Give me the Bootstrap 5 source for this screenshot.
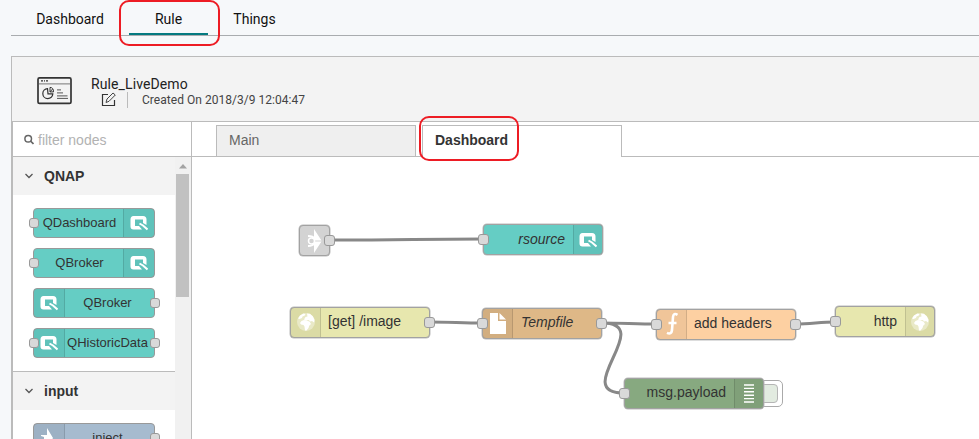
<!DOCTYPE html>
<html lang="en">
<head>
<meta charset="utf-8">
<meta name="viewport" content="width=device-width, initial-scale=1">
<title>Rule_LiveDemo</title>
<link href="https://cdn.jsdelivr.net/npm/bootstrap@5.3.0/dist/css/bootstrap.min.css" rel="stylesheet">
<style>
body{background:#f6f8fa;font-family:Roboto,"Liberation Sans",sans-serif;font-size:14px;line-height:20px;color:#222;height:439px}
svg{display:block;flex:none}
.top-tabs{margin-left:11px;height:36px;border-bottom:1px solid #a9acaf}
.top-tabs .nav-link{color:#111;height:35px;padding:9px 0 0;text-align:center;border-radius:0}
.t-dash{width:118px}.t-rule{width:79px;border-bottom:2px solid #047a80}.t-things{width:91px;margin-left:1px}
.callout{position:absolute;border:2px solid #ed1c24;border-radius:10px;z-index:9}
.c-rule{left:119px;top:0;width:101px;height:46px}
.c-dash{left:419px;top:116px;width:100px;height:45px}
.workspace{margin:20px 0 0 11px;height:383px;border:solid #bbb;border-width:1px 0 0 1px;overflow:hidden}
.rule-head{height:65px;background:#f3f3f3;border-bottom:1px solid #bbb;padding:18px 0 0 25px}
.win-icon{margin-top:2px}
.rule-info{padding-left:18px}
.rule-name{line-height:18px;height:17px;letter-spacing:.1px}
.meta{font-size:12px;line-height:16px;color:#444;padding-left:10px}
.meta .sep{width:1px;height:16px;background:#bbb;margin:0 14px 0 11px}
.stamp{letter-spacing:.03px}
.arial{font-family:"Liberation Sans",Arial,sans-serif}
.palette{width:180px;border:solid #bbb;border-width:0 1px}
.search{height:35px;border-bottom:1px solid #bbb;color:#b2b2b2;padding:1px 0 0 11px}
.cats{width:162px;background:#fff}
.cat{height:38px;background:#f3f3f3;font-weight:700;color:#333;padding-left:11px;gap:10px}
.cat.ruled{height:39px;border-top:1px solid #bbb}
.cat-list{padding:13px 0 13px 20px;gap:10px;height:176px}
.track{width:16px;background:#f1f1f1;flex:none}
.thumb{width:13px;height:123px;background:#c1c1c1;margin-left:1px}
.arrow{height:17px;padding:7px 0 0 4px}
.node{position:relative;display:flex;align-items:stretch;height:30px;border:1px solid #999;border-radius:4px;color:#333;font-size:13px}
.cat-list .node{width:122px;flex:none}
.node .cap{flex:1;display:flex;align-items:center;justify-content:center;white-space:nowrap;padding-bottom:1px}
.cat-list .cap{padding-left:2px}
.cat-list .ico + .cap{padding-left:0}
.node .ico{width:31px;flex:none;display:flex;align-items:center;justify-content:center;background:rgba(0,0,0,.05);border:0 solid rgba(0,0,0,.12)}
.ico.l{border-right-width:1px!important}.ico.r{border-left-width:1px!important}
.port{position:absolute;width:10px;height:10px;border:1px solid #999;border-radius:3px;background:#d9d9d9;top:9px;z-index:2}
.port.in{left:-5px}.port.out{right:-6px}
.teal{background:#65cdc4}.blue{background:#a6bbcf}.yellow{background:#e7e7ae}.tan{background:#deb887}.peach{background:#fdd0a2}.green{background:#87a980}.grey{background:#d3d3d3}
.tabs-row{height:35px;border-bottom:1px solid #bbb;padding:3px 0 0 24px}
.flow-tab{width:200px;height:31px;border:1px solid #bbb;border-bottom:0;padding:4px 0 0 12px;background:#efefef;color:#666}
.flow-tab.on{height:32px;margin-left:6px;background:#fff;color:#333;font-weight:700}
.canvas{position:relative;height:282px;overflow:hidden}
.canvas svg.wires{position:absolute;left:0;top:0}
.canvas .node{position:absolute;height:31px;font-size:14px;border-color:#a2a2a2;box-shadow:0 0 0 .5px #bbb}
.canvas .cap{padding:0 8px 2px 7px}
.canvas .ico{width:30px}
.canvas .ico.r{width:29px}
.canvas .port{width:11px;height:11px}
.canvas .port.in{left:-6px}
.n-link{left:107px;top:68px;width:31px}
.n-rs{left:291px;top:67px;width:120px}
.n-get{left:98px;top:149.5px;width:140px}
.n-tmp{left:290px;top:150.5px;width:120px}
.n-add{left:464px;top:151.5px;width:140px}
.n-msg{left:432px;top:220.5px;width:140px}
.n-http{left:643px;top:149px;width:100px}
.n-tmp .cap{padding-left:8px}
.debug-btn{position:absolute;left:560px;top:222.5px;width:31px;height:27px;border:1px solid #aaa;border-radius:5px;background:#fff;padding:3px 4px}
.debug-btn div{height:19px;background:#e2ebe0;border:1px solid #b5b5b5;border-radius:4px}
</style>
<script src="https://cdn.jsdelivr.net/npm/bootstrap@5.3.0/dist/js/bootstrap.bundle.min.js"></script>
</head>
<body class="overflow-hidden">
<svg width="0" height="0" class="position-absolute">
<symbol id="q" viewBox="0 0 18 16"><path fill="#fff" fill-rule="evenodd" d="M3.500 1H13q3.500 0 3.500 3.500V10L13 8V4.500H5v6.500h4l3 3.500H3.500Q.5 14.500.5 11.500v-7Q.5 1 3.500 1Z"/><path fill="none" stroke="#fff" stroke-width="2" d="m9.500 8.500 3.500 2 4.500 4"/></symbol>
<symbol id="globe" viewBox="0 0 20 20"><circle cx="10" cy="10" r="9" fill="#fff" opacity=".38"/><path fill="#fff" d="M2 6.500 4 3.500 7.500 1.500l2 .5-1 1.700-2 .8-.5 1.500-2.500 1ZM11 1.500l3 .2 3 2.800 1.500 3.500-.5 2.500-2-1.500-1.500.5-2-1.500-2.500.5-2-1 1.500-2.500 2-.5ZM5.500 9 8 8l3 .8 2.500.7 1.500 2.500-1.800 1.800-.7 2.200-2 2.500H9l-.5-4-1-1.500-2.500-.5-1-1.500Z"/></symbol>
<symbol id="chev" viewBox="0 0 10 8"><path d="m1.500 2 3.500 3.500L8.500 2" fill="none" stroke="#555" stroke-width="1.300"/></symbol>
</svg>
<nav class="nav top-tabs flex-nowrap">
<a class="nav-link t-dash">Dashboard</a><a class="nav-link t-rule">Rule</a><a class="nav-link t-things">Things</a>
</nav>
<div class="callout c-rule"></div><div class="callout c-dash"></div>
<main class="workspace d-flex flex-column">
<header class="rule-head d-flex flex-shrink-0">
<svg width="36" height="28" viewBox="0 0 36 28" class="win-icon"><g transform="translate(0 -1.600)" fill="none" stroke="#333"><rect x="1" y="2.500" width="33" height="25.500" rx="1.500" stroke-width="1.700"/><path d="M2 8.500h31" stroke="#777"/><path d="M4 5.500h2m1 0h1m1 0h2" stroke-width="1.300"/><path d="M10.500 13.200a5 5 0 1 0 5.300 5.300H11Z" stroke-width="1.200"/><path d="M13 12v4.500h3.500Q16.500 12 13 12Zm0 4.500 2.500-2.800" stroke-width="1"/><path d="M20 14.500h4m-4 3h6m-6 3h10.500m-10.500 2.500h11" stroke="#555"/></g></svg>
<div class="rule-info">
<div class="rule-name">Rule_LiveDemo</div>
<div class="meta d-flex align-items-start"><svg width="15" height="16" viewBox="0 0 15 16"><path d="M7 2.500H1.500v11h12V8" fill="none" stroke="#333" stroke-width="1.200"/><path d="m5 10.500 1-3.500L12 1l2.300 2-6.300 6.300Z" fill="none" stroke="#444"/></svg><span class="sep"></span><span class="stamp">Created On 2018/3/9 12:04:47</span></div>
</div>
</header>
<div class="d-flex flex-grow-1 bg-white arial">
<aside class="palette flex-shrink-0">
<div class="search d-flex align-items-center gap-1"><svg width="10" height="11" viewBox="0 0 10 11"><circle cx="4.200" cy="4.700" r="3.300" fill="none" stroke="#666" stroke-width="1.500"/><path d="m6.500 7 3 3" stroke="#666" stroke-width="1.700"/></svg><span>filter nodes</span></div>
<div class="d-flex">
<div class="cats">
<div class="cat d-flex align-items-center"><svg width="10" height="8"><use href="#chev"/></svg><span>QNAP</span></div>
<div class="cat-list d-flex flex-column">
<div class="node teal"><i class="port in"></i><span class="cap">QDashboard</span><span class="ico r"><svg width="18" height="16"><use href="#q"/></svg></span></div>
<div class="node teal"><i class="port in"></i><span class="cap">QBroker</span><span class="ico r"><svg width="18" height="16"><use href="#q"/></svg></span></div>
<div class="node teal"><span class="ico l"><svg width="18" height="16"><use href="#q"/></svg></span><span class="cap pe-1">QBroker</span><i class="port out"></i></div>
<div class="node teal"><i class="port in"></i><span class="ico l"><svg width="18" height="16"><use href="#q"/></svg></span><span class="cap pe-1">QHistoricData</span><i class="port out"></i></div>
</div>
<div class="cat ruled d-flex align-items-center"><svg width="10" height="8"><use href="#chev"/></svg><span>input</span></div>
<div class="cat-list d-flex flex-column">
<div class="node blue"><span class="ico l"><svg width="18" height="24" viewBox="0 0 18 24"><path fill="#fff" d="M1 9h6V2l6 10-6 10v-6H1l3-1v-4l-3-1Z"/></svg></span><span class="cap pe-1">inject</span><i class="port out"></i></div>
</div>
</div>
<div class="track"><div class="arrow"><svg width="8" height="5"><path d="M0 4.500 4 0l4 4.500Z" fill="#a3a3a3"/></svg></div><div class="thumb"></div></div>
</div>
</aside>
<section class="flex-grow-1">
<div class="tabs-row d-flex"><div class="flow-tab">Main</div><div class="flow-tab on">Dashboard</div></div>
<div class="canvas">
<svg class="wires" width="787" height="282" fill="none" stroke="#888" stroke-width="3"><path d="M137 83C220 83 220 82 291 82M238 165C256 165 272 166 290 166M410 166C428 166 446 167 464 167M410 166C465 166 377 236 432 236M604 167C619 167 628 165 643 165"/></svg>
<div class="node grey n-link"><svg width="23" height="26" viewBox="0 0 23 26" class="my-auto ms-1"><path fill="#fff" d="m10 1 7.500 11.500H10ZM10 25l7.500-11.500H10Z"/><path d="M4 8q5 0 7 3M4 18q5 0 7-3" stroke="#fff" stroke-width="2" fill="none"/><circle cx="7.500" cy="13" r="3" fill="#d3d3d3" stroke="#fff" stroke-width="1.500"/></svg><i class="port out"></i></div>
<div class="node teal n-rs"><i class="port in"></i><span class="cap fst-italic justify-content-end">rsource</span><span class="ico r"><svg width="18" height="16"><use href="#q"/></svg></span></div>
<div class="node yellow n-get"><span class="ico l"><svg width="20" height="20"><use href="#globe"/></svg></span><span class="cap justify-content-start">[get] /image</span><i class="port out"></i></div>
<div class="node tan n-tmp"><i class="port in"></i><span class="ico l"><svg width="16" height="21" viewBox="0 0 16 21"><path fill="#fff" d="M0 0h8v8h8v13H0ZM9.500 0 16 6.500H9.500Z"/></svg></span><span class="cap justify-content-start fst-italic">Tempfile</span><i class="port out"></i></div>
<div class="node peach n-add"><i class="port in"></i><span class="ico l"><svg width="14" height="24" viewBox="0 0 14 24"><path d="M12.500 2.800Q8.500.5 8 5L7 18Q6.500 23 2 20.800M3.500 11h8" fill="none" stroke="#fff" stroke-width="2.600"/></svg></span><span class="cap justify-content-start">add headers</span><i class="port out"></i></div>
<div class="debug-btn"><div></div></div>
<div class="node green n-msg"><i class="port in"></i><span class="cap justify-content-end">msg.payload</span><span class="ico r"><svg width="10" height="19" viewBox="0 0 10 19"><path d="M0 1h10M0 4.400h10M0 7.800h10M0 11.200h10M0 14.600h10M0 18h10" stroke="#fff" stroke-width="1.400"/></svg></span></div>
<div class="node yellow n-http"><i class="port in"></i><span class="cap justify-content-end">http</span><span class="ico r"><svg width="20" height="20"><use href="#globe"/></svg></span></div>
</div>
</section>
</div>
</main>
</body>
</html>
